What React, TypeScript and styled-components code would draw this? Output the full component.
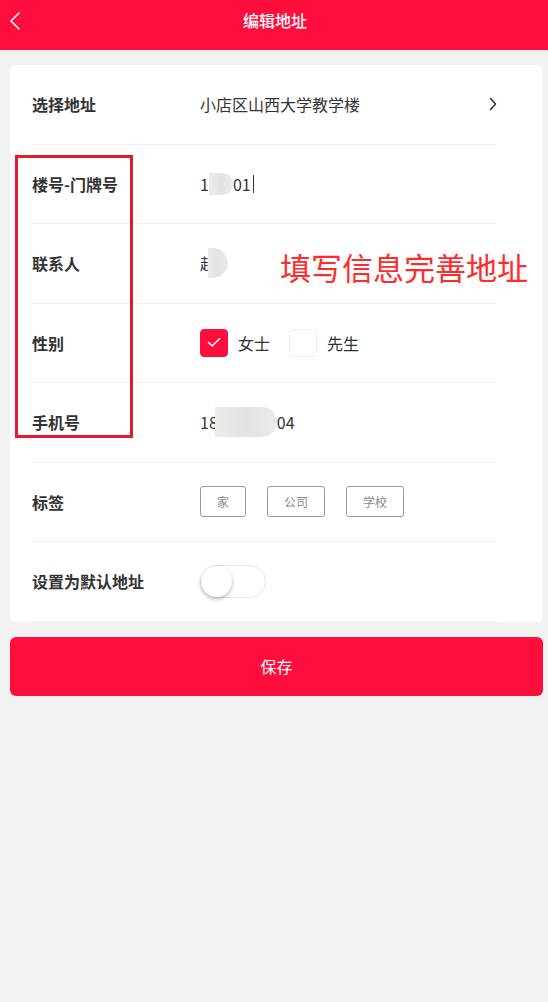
import React from "react";
import styled, { createGlobalStyle } from "styled-components";

const RED = "#ff0d3c";

const GlobalStyle = createGlobalStyle`
    body {
        margin: 0;
        background: #f2f2f2;
        font-family: "Noto Sans CJK SC", "Noto Sans", sans-serif;
        color: #333;
    }
`;

const Page = styled.div`
    position: relative;
    width: 548px;
    min-height: 1002px;
    background: #f2f2f2;
`;

const Header = styled.header`
    display: grid;
    grid-template-columns: 40px 1fr 40px;
    align-items: center;
    height: 50px;
    background: ${RED};
    color: #fff;
`;

const BackButton = styled.button`
    display: flex;
    align-items: center;
    justify-content: flex-start;
    height: 40px;
    padding: 0 0 8px 9px;
    border: none;
    background: transparent;
    cursor: pointer;
`;

const Title = styled.h1`
    margin: 0 0 10px 0;
    text-align: center;
    font-size: 16px;
    font-weight: 500;
    line-height: 20px;
    padding-left: 2px;
`;

const Card = styled.section`
    margin: 15px 5px 0 10px;
    padding: 0 46px 0 22px;
    background: #fff;
    border-radius: 6px;
`;

const Row = styled.div`
    display: flex;
    align-items: center;
    height: 79.5px;
    border-bottom: 1px solid #f0f0f0;
    box-sizing: border-box;
`;

const Label = styled.div`
    width: 168px;
    flex-shrink: 0;
    font-size: 16px;
    font-weight: 700;
    color: #333;
`;

const Value = styled.div`
    flex: 1;
    display: flex;
    align-items: center;
    font-size: 16px;
    color: #333;
`;

const Mosaic = styled.span<{ $w: number; $h: number; $overlap?: number }>`
    display: inline-block;
    width: ${(p) => p.$w}px;
    height: ${(p) => p.$h}px;
    margin-left: ${(p) => -(p.$overlap ?? 0)}px;
    background: linear-gradient(90deg, #ececec, #e2e2e2 50%, #ebebeb);
    border-radius: 0 ${(p) => p.$h / 2}px ${(p) => p.$h / 2}px 0;
    filter: blur(0.6px);
`;

const Caret = styled.span`
    display: inline-block;
    width: 1px;
    height: 18px;
    margin-left: 2px;
    background: #333;
`;

const Check = styled.span<{ $on?: boolean }>`
    display: inline-flex;
    align-items: center;
    justify-content: center;
    width: 28px;
    height: 28px;
    box-sizing: border-box;
    border-radius: 4px;
    background: ${(p) => (p.$on ? RED : "#fff")};
    border: 1px solid ${(p) => (p.$on ? RED : "#eee")};
`;

const Option = styled.label`
    display: flex;
    align-items: center;
    gap: 10px;
    margin-right: 19px;
    font-size: 16px;
`;

const Tags = styled.div`
    display: flex;
    gap: 21px;
`;

const Tag = styled.span`
    display: inline-flex;
    align-items: center;
    height: 31px;
    padding: 0 16px;
    box-sizing: border-box;
    border: 1px solid #9a9a9a;
    border-radius: 3px;
    font-size: 12px;
    color: #8a8a8a;
`;

const Toggle = styled.span`
    display: inline-flex;
    align-items: center;
    width: 66px;
    height: 33px;
    box-sizing: border-box;
    border: 1px solid #e6e6e6;
    border-radius: 17px;
    background: #fff;
`;

const Knob = styled.span`
    width: 31px;
    height: 31px;
    border-radius: 50%;
    background: #fff;
    box-shadow: 0 2px 4px rgba(0, 0, 0, 0.28);
`;

const SaveButton = styled.button`
    display: block;
    width: 533px;
    height: 59px;
    margin: 15px 5px 0 10px;
    border: none;
    border-radius: 6px;
    background: ${RED};
    color: #fff;
    font-family: inherit;
    font-size: 16px;
    cursor: pointer;
`;

const HighlightBox = styled.div`
    position: absolute;
    left: 15px;
    top: 155px;
    width: 118px;
    height: 283px;
    box-sizing: border-box;
    border: 3px solid #e8182c;
    pointer-events: none;
`;

const Note = styled.div`
    position: absolute;
    left: 280px;
    top: 251px;
    font-size: 31px;
    line-height: 1;
    color: #ff2b2b;
    pointer-events: none;
`;

export default function App() {
    return (
        <Page>
            <GlobalStyle />
            <Header>
                <BackButton>
                    <svg width="12" height="20" viewBox="0 0 12 20" fill="none">
                        <path d="M10 2 L2 10 L10 18" stroke="#fff" strokeWidth="1.6" strokeLinecap="round" strokeLinejoin="round" />
                    </svg>
                </BackButton>
                <Title>编辑地址</Title>
                <span />
            </Header>

            <Card>
                <Row>
                    <Label>选择地址</Label>
                    <Value>小店区山西大学教学楼</Value>
                    <svg width="8" height="14" viewBox="0 0 8 14" fill="none">
                        <path d="M1.5 1.5 L6.5 7 L1.5 12.5" stroke="#333" strokeWidth="1.6" strokeLinecap="round" strokeLinejoin="round" />
                    </svg>
                </Row>
                <Row>
                    <Label>楼号-门牌号</Label>
                    <Value>
                        1<Mosaic $w={24} $h={22} />01<Caret />
                    </Value>
                </Row>
                <Row>
                    <Label>联系人</Label>
                    <Value>
                        赵<Mosaic $w={20} $h={30} $overlap={8} />
                    </Value>
                </Row>
                <Row>
                    <Label>性别</Label>
                    <Value>
                        <Option>
                            <Check $on>
                                <svg width="14" height="11" viewBox="0 0 14 11" fill="none">
                                    <path d="M1.5 5.5 L5.2 9 L12.5 1.8" stroke="#fff" strokeWidth="1.6" strokeLinecap="round" strokeLinejoin="round" />
                                </svg>
                            </Check>
                            女士
                        </Option>
                        <Option>
                            <Check />
                            先生
                        </Option>
                    </Value>
                </Row>
                <Row>
                    <Label>手机号</Label>
                    <Value>
                        18<Mosaic $w={62} $h={30} $overlap={3} />04
                    </Value>
                </Row>
                <Row>
                    <Label>标签</Label>
                    <Value>
                        <Tags>
                            <Tag>家</Tag>
                            <Tag>公司</Tag>
                            <Tag>学校</Tag>
                        </Tags>
                    </Value>
                </Row>
                <Row>
                    <Label>设置为默认地址</Label>
                    <Value>
                        <Toggle>
                            <Knob />
                        </Toggle>
                    </Value>
                </Row>
            </Card>

            <SaveButton>保存</SaveButton>

            <HighlightBox />
            <Note>填写信息完善地址</Note>
        </Page>
    );
}
